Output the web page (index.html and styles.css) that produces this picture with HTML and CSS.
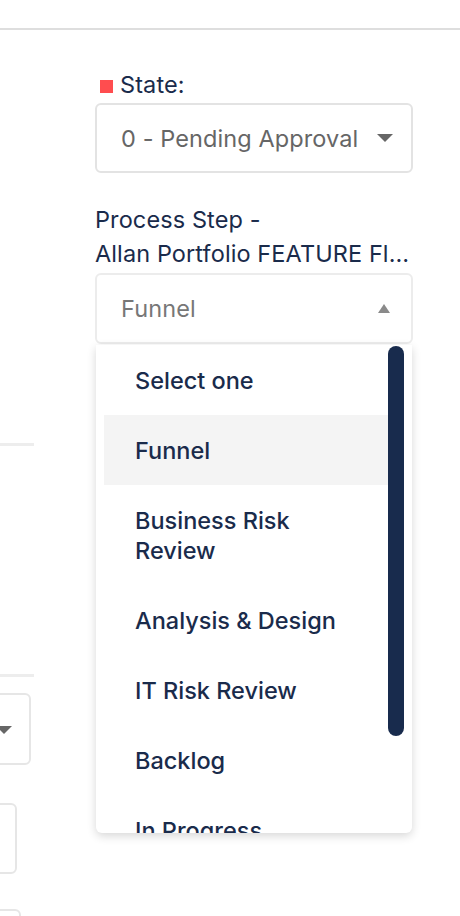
FILE: index.html
```html
<!DOCTYPE html>
<html lang="en">
<head>
<meta charset="utf-8">
<title>Process Step</title>
<link rel="stylesheet" href="styles.css">
</head>
<body>
<div class="topbar"></div>
<div class="layout">
  <div class="left-col">
    <div class="divider first"></div>
    <div class="divider second"></div>
    <div class="stub stub-select"><span class="caret caret-down"></span></div>
    <div class="stub stub-input"></div>
    <div class="stub stub-input last"></div>
  </div>
  <div class="right-col">
    <div class="field">
      <div class="label"><span class="required"></span>State:</div>
      <div class="select"><span class="value">0 - Pending Approval</span><span class="caret caret-down"></span></div>
    </div>
    <div class="field field-process">
      <div class="label label-multi">Process Step -<br><span class="nowrap">Allan Portfolio FEATURE Fl…</span></div>
      <div class="select-wrap">
        <div class="select select-open"><span class="value light">Funnel</span><span class="caret caret-up"></span></div>
        <div class="dropdown">
          <ul class="options">
            <li class="option">Select one</li>
            <li class="option active">Funnel</li>
            <li class="option">Business Risk Review</li>
            <li class="option">Analysis &amp; Design</li>
            <li class="option">IT Risk Review</li>
            <li class="option">Backlog</li>
            <li class="option">In Progress</li>
          </ul>
          <div class="thumb"></div>
        </div>
      </div>
    </div>
  </div>
</div>
</body>
</html>
```
FILE: styles.css
```css
* { box-sizing: border-box; }
html, body { margin: 0; padding: 0; background: #fff; }
body {
  width: 460px;
  height: 916px;
  overflow: hidden;
  font-family: Inter, "Liberation Sans", sans-serif;
  color: #1a2b4b;
}
.topbar {
  height: 30px;
  border-bottom: 2px solid #dedede;
}
.layout {
  display: grid;
  grid-template-columns: 34px 318px;
  column-gap: 61px;
  height: 886px;
  overflow: hidden;
}
.left-col {
  display: flex;
  flex-direction: column;
  padding-top: 413px;
}
.divider {
  height: 3px;
  background: #ededed;
  width: 34px;
}
.divider.second { margin-top: 228px; }
.stub {
  border: 2px solid #e6e6e6;
  border-radius: 6px;
  background: #fff;
  position: relative;
  flex-shrink: 0;
}
.stub-select {
  margin-top: 16px;
  margin-left: -220px;
  width: 251px;
  height: 72px;
}
.stub-input {
  margin-top: 38px;
  margin-left: -220px;
  width: 237px;
  height: 71px;
}
.stub-input.last {
  margin-top: 35px;
  width: 241px;
}
.right-col {
  padding-top: 38px;
}
.field-process { margin-top: 30px; }
.label {
  font-size: 23.5px;
  line-height: 34px;
  font-weight: 400;
  display: flex;
  align-items: center;
  gap: 7px;
  padding-left: 5px;
  margin-bottom: 1px;
  letter-spacing: 0.1px;
}
.label-multi {
  display: block;
  padding-left: 0;
  margin-bottom: 2px;
}
.nowrap { white-space: nowrap; }
.required {
  width: 13px;
  height: 13px;
  background: #ff4d4f;
  display: inline-block;
  margin-top: 2px;
}
.select {
  height: 70px;
  border: 2px solid #e3e3e3;
  border-radius: 6px;
  display: flex;
  align-items: center;
  padding: 0 18px 0 24px;
  position: relative;
  background: #fff;
}
.select-open { height: 71px; border-color: #ececec; }
.value {
  flex: 1;
  font-size: 23.5px;
  color: #666;
  letter-spacing: 0.1px;
  white-space: nowrap;
}
.value.light { color: #777; }
.caret {
  width: 0;
  height: 0;
  display: block;
}
.caret-down {
  border-left: 8px solid transparent;
  border-right: 8px solid transparent;
  border-top: 8px solid #666;
}
.caret-up {
  border-left: 6px solid transparent;
  border-right: 6px solid transparent;
  border-bottom: 9px solid #8a8a8a;
  margin-right: 3px;
}
.stub .caret-down {
  position: absolute;
  right: 17px;
  top: 31px;
}
.select-wrap { position: relative; }
.dropdown {
  position: absolute;
  top: calc(100% + 1px);
  left: 1px;
  right: 1px;
  height: 488px;
  background: #fff;
  border-radius: 0 0 6px 6px;
  box-shadow: 0 3px 10px rgba(0,0,0,0.16);
  overflow: hidden;
  z-index: 5;
}
.options {
  list-style: none;
  margin: 0;
  padding: 0 24px 0 8px;
}
.option {
  padding: 21px 31px 19px;
  line-height: 30px;
  font-size: 23.5px;
  font-weight: 550;
  color: #1a2b4b;
}
.option.active { background: #f4f4f4; }
.thumb {
  position: absolute;
  top: 1px;
  right: 8px;
  width: 16px;
  height: 390px;
  border-radius: 8px;
  background: #182b4d;
}
```
